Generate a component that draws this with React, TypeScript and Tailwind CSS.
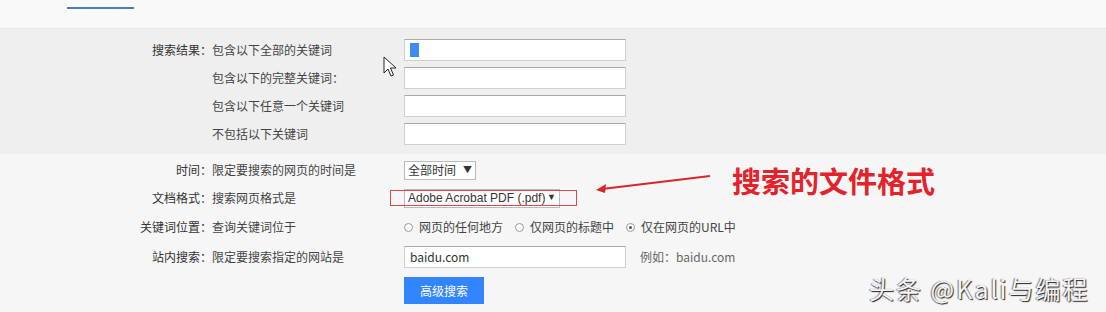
import React from "react";

const font = "font-['Noto_Sans_CJK_SC','Noto_Sans',sans-serif]";

function Row({
  label,
  desc,
  height,
  children,
}: {
  label?: string;
  desc: string;
  height: string;
  children?: React.ReactNode;
}) {
  return (
    <div className={`flex items-center ${height}`}>
      <div className="w-[112px] shrink-0 text-right text-[12px] text-[#333]">
        {label}
      </div>
      <div className="w-[192px] shrink-0 text-[12px] text-[#444]">{desc}</div>
      <div className="flex items-center">{children}</div>
    </div>
  );
}

function TextBox({ value, selected }: { value?: string; selected?: boolean }) {
  return (
    <div className="flex h-[22px] w-[222px] items-center border border-[#cfcfcf] border-t-[#a9a9a9] bg-white px-[5px] text-[12px] text-[#333]">
      {selected && <span className="h-[14px] w-[9px] bg-[#3d8cf2]" />}
      {value}
    </div>
  );
}

function Radio({ label, checked }: { label: string; checked?: boolean }) {
  return (
    <label className="mr-[12px] flex items-center gap-[6px] text-[12px] text-[#444]">
      <span className="flex h-[9px] w-[9px] items-center justify-center rounded-full border border-[#999] bg-white">
        {checked && <span className="h-[3px] w-[3px] rounded-full bg-[#555]" />}
      </span>
      {label}
    </label>
  );
}

export default function App() {
  return (
    <div className={`relative h-[312px] w-[1106px] overflow-hidden bg-[#f6f6f6] ${font}`}>
      {/* top tab strip */}
      <div className="h-[29px] border-b border-[#e6e6e6] bg-[#f9f9f9] pl-[67px] pt-[7px]">
        <div className="h-[2px] w-[67px] bg-[#4a7cc2]" />
      </div>

      {/* keyword group */}
      <div className="bg-[#efefef] pb-[6px] pl-[100px] pt-[7px]">
        <Row label="搜索结果：" desc="包含以下全部的关键词" height="h-[28px]">
          <TextBox selected />
        </Row>
        <Row desc="包含以下的完整关键词：" height="h-[28px]">
          <TextBox />
        </Row>
        <Row desc="包含以下任意一个关键词" height="h-[28px]">
          <TextBox />
        </Row>
        <Row desc="不包括以下关键词" height="h-[28px]">
          <TextBox />
        </Row>
      </div>

      {/* options */}
      <div className="pl-[100px] pt-[2px]">
        <Row label="时间：" desc="限定要搜索的网页的时间是" height="h-[28px]">
          <div className="flex h-[19px] w-[72px] items-center justify-between border border-[#bbb] bg-white px-[3px] text-[12px] text-[#333]">
            全部时间<span className="text-[9px]">▼</span>
          </div>
        </Row>
        <Row label="文档格式：" desc="搜索网页格式是" height="h-[28px]">
          <div className="flex h-[19px] w-[156px] items-center justify-between border border-[#bbb] bg-white px-[3px] text-[12px] text-[#333] font-['Liberation_Sans',sans-serif]">
            Adobe Acrobat PDF (.pdf)<span className="text-[9px]">▼</span>
          </div>
        </Row>
        <Row label="关键词位置：" desc="查询关键词位于" height="h-[30px]">
          <Radio label="网页的任何地方" />
          <Radio label="仅网页的标题中" />
          <Radio label="仅在网页的URL中" checked />
        </Row>
        <Row label="站内搜索：" desc="限定要搜索指定的网站是" height="h-[30px]">
          <TextBox value="baidu.com" />
          <span className="ml-[14px] text-[12px] text-[#666]">例如：baidu.com</span>
        </Row>
        <div className="ml-[304px] mt-[5px] flex h-[27px] w-[80px] items-center justify-center bg-[#3385ff] text-[12px] text-white">
          高级搜索
        </div>
      </div>

      {/* annotation overlay */}
      <div className="absolute left-[390px] top-[190px] h-[16px] w-[187px] border border-[#e0464b]" />
      <svg className="absolute left-[590px] top-[170px]" width="130" height="30" viewBox="0 0 130 30">
        <line x1="120" y1="6" x2="12" y2="19" stroke="#d9262b" strokeWidth="2" />
        <path d="M6 20 L16 14 L15 23 Z" fill="#d9262b" />
      </svg>
      <div className="absolute left-[732px] top-[162px] text-[29px] font-bold leading-[36px] text-[#e3232b]">
        搜索的文件格式
      </div>

      {/* mouse cursor */}
      <svg className="absolute left-[383px] top-[56px]" width="16" height="22" viewBox="0 0 16 22">
        <path d="M1 1 L1 17 L5 13 L8 20 L10.5 19 L7.5 12 L13 12 Z" fill="#fff" stroke="#222" strokeWidth="1" strokeLinejoin="round" />
      </svg>

      {/* watermark */}
      <div className="absolute left-[869px] top-[272px] text-[25px] leading-[32px] tracking-[2px] text-[#f4f4f4] [text-shadow:1px_1px_1px_rgba(0,0,0,0.85),-1px_0_1px_rgba(0,0,0,0.5)]">
        头条 @Kali与编程
      </div>
    </div>
  );
}
